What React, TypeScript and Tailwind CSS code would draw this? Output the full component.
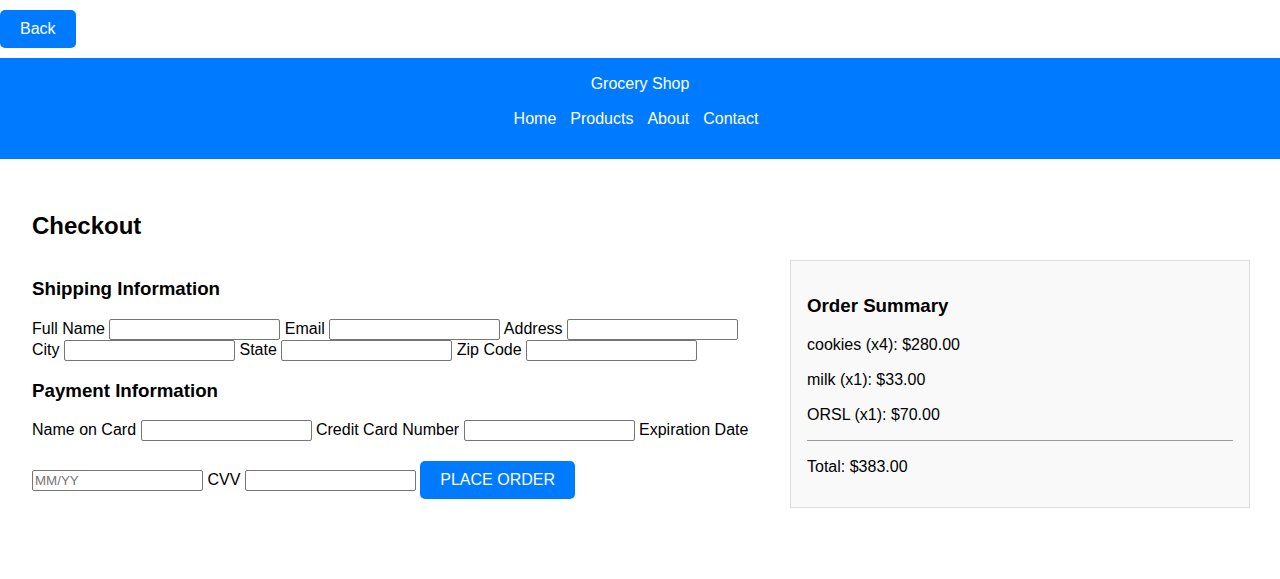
import React from 'react';

const items = [
  { name: 'cookies', qty: 4, price: 280 },
  { name: 'milk', qty: 1, price: 33 },
  { name: 'ORSL', qty: 1, price: 70 },
];

const Field = ({ placeholder }: { placeholder?: string }) => (
  <input
    type="text"
    placeholder={placeholder}
    className="w-[171px] h-[21px] border border-[#767676] rounded-[2px] px-[2px] text-[13.33px] bg-white align-baseline placeholder:text-[#757575]"
  />
);

const App = () => {
  const total = items.reduce((s, i) => s + i.price, 0);

  return (
    <div className="min-h-screen bg-white text-black font-['Liberation_Sans',Arial,sans-serif] leading-[normal] text-[16px]">
      <button className="mt-[10px] bg-[#007bff] text-white px-5 py-[10px] rounded-[5px] leading-[normal]">
        Back
      </button>

      <header className="mt-[10px] bg-[#007bff] text-white pt-[17px] pb-[31px] text-center">
        <div>Grocery Shop</div>
        <nav className="mt-[17px] flex justify-center gap-[14px] pr-[8px]">
          <a href="#">Home</a>
          <a href="#">Products</a>
          <a href="#">About</a>
          <a href="#">Contact</a>
        </nav>
      </header>

      <main className="px-8 pt-8">
        <h2 className="text-[24px] font-bold mt-[21px] mb-[20px]">Checkout</h2>

        <div className="flex items-start gap-[31px]">
          <div className="w-[727px] shrink-0">
            <h3 className="text-[18.72px] font-bold mt-[18px] mb-[18.72px]">Shipping Information</h3>
            <div>
              <label>Full Name</label> <Field /> <label>Email</label> <Field />{' '}
              <label>Address</label> <Field /> <label>City</label> <Field />{' '}
              <label>State</label> <Field /> <label>Zip Code</label> <Field />
            </div>

            <h3 className="text-[18.72px] font-bold mt-[19px] mb-[18.72px]">Payment Information</h3>
            <div>
              <label>Name on Card</label> <Field /> <label>Credit Card Number</label> <Field />{' '}
              <label>Expiration Date</label> <Field placeholder="MM/YY" /> <label>CVV</label>{' '}
              <Field />{' '}
              <button className="mt-[20px] inline-block bg-[#007bff] text-white px-5 py-[10px] rounded-[5px] leading-[normal]">
                PLACE ORDER
              </button>
            </div>
          </div>

          <div className="w-[460px] shrink-0 bg-[#f9f9f9] border border-[#dddddd] px-[16px] py-[15px] leading-[19px]">
            <h3 className="text-[18.72px] font-bold my-[18.72px] leading-[normal]">Order Summary</h3>
            {items.map((item) => (
              <p key={item.name} className="my-4">
                {item.name} (x{item.qty}): ${item.price.toFixed(2)}
              </p>
            ))}
            <hr className="border-t border-[#9a9a9a]" />
            <p className="my-4">Total: ${total.toFixed(2)}</p>
          </div>
        </div>
      </main>
    </div>
  );
};

export default App;
